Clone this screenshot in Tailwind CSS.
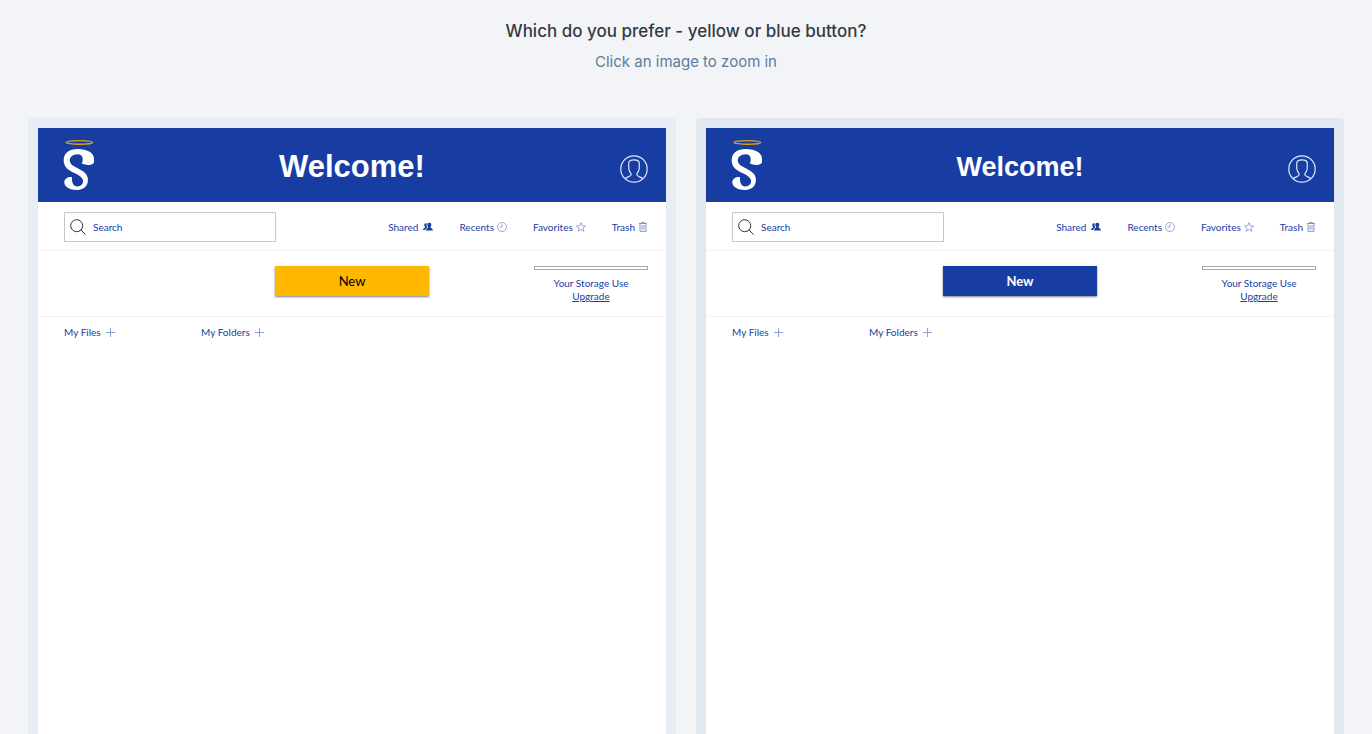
<!DOCTYPE html>
<html lang="en">
<head>
<meta charset="utf-8">
<meta name="viewport" content="width=device-width, initial-scale=1">
<title>Which do you prefer - yellow or blue button?</title>
<script src="https://cdn.jsdelivr.net/npm/@tailwindcss/browser@4"></script>
</head>
<body class="flex min-h-screen flex-col bg-[#f2f4f8] font-['Inter','Liberation_Sans',sans-serif]">
<svg class="hidden" aria-hidden="true">
  <symbol id="logo" viewBox="0 0 32 52">
    <ellipse cx="16.5" cy="3.4" rx="13.2" ry="1.8" fill="none" stroke="#dba60f" stroke-width="1.4"/>
    <path fill="#fff" d="M30.6 24.2C28.5 26.4 23 26.6 18.8 24.6C20.6 20.4 20.2 15.3 14.8 15.2C9.6 15.2 6.3 18.3 6.8 22.3C7.5 27.6 17.2 29.3 22 34C25.4 37.3 25.9 42.8 23.4 46.6C21.4 49.7 17.8 51.1 13.4 51C7 50.9 1.3 47.8 1.3 43.2C1.4 39.8 4.4 37.8 8.9 38C8.8 43.8 10 47.3 14.6 47.4C18.8 47.4 20.8 44.2 19.8 40.6C18.2 35.5 8.8 33.8 4 29.4C1.4 27 .5 24 .7 20.6C1 13.6 6.6 9.9 14.5 9.9C23.6 9.8 30.6 13.2 31 19.4C31.1 21.4 31.1 22.8 30.6 24.2Z"/>
  </symbol>
  <symbol id="person" viewBox="0 0 28 28">
    <g fill="none" stroke="#e3e9f6" stroke-width="1.2">
      <circle cx="14" cy="14" r="13.2"/>
      <path d="M5 23.6C7.5 21.8 11 21.3 11.2 19.7C11.5 18.2 8.9 16.4 8.8 13.8L8.7 8.4C8.7 6.2 10.5 4.8 14 4.8S19.3 6.2 19.3 8.4L19.2 13.8C19.1 16.4 16.5 18.2 16.8 19.7C17 21.3 20.5 21.8 23 23.6"/>
    </g>
  </symbol>
  <symbol id="search" viewBox="0 0 16 16">
    <g fill="none" stroke="#333" stroke-width="1"><circle cx="6.7" cy="6.7" r="6"/><path d="M11 11L15.5 15.5"/></g>
  </symbol>
  <symbol id="people" viewBox="0 0 10 10">
    <path fill="#183da2" d="M4.3 2.6C4.3 1.5 5.1 .8 6.3 .8S8.3 1.5 8.3 2.6C8.3 4 7.6 4.5 7.5 5.3C7.6 6.2 9.7 6.2 10 8.6H2.9C3.2 6.2 5 6.2 5.1 5.3C5 4.5 4.3 4 4.3 2.6ZM3.7 1.5C2.4 .9 1.2 1.7 1.3 3C1.4 4.3 2 4.5 2 5.2C1.9 6 .3 6 0 7.9H2.2C2.5 6.5 3.6 6.1 4.1 5.5C4.1 4.7 3.2 3.5 3.7 1.5Z"/>
  </symbol>
  <symbol id="clock" viewBox="0 0 10 10">
    <g fill="none" stroke="#7d93cc" stroke-width=".8"><circle cx="5" cy="5" r="4.5"/><path d="M5 2V5H2.5"/></g>
  </symbol>
  <symbol id="star" viewBox="0 0 10 10">
    <path fill="none" stroke="#7188c8" stroke-width=".7" stroke-linejoin="round" d="M5 .6L6.3 3.8L9.6 3.9L7 6L7.9 9.3L5 7.4L2.1 9.3L3 6L.4 3.9L3.7 3.8Z"/>
  </symbol>
  <symbol id="bin" viewBox="0 0 10 10">
    <path fill="none" stroke="#6880c3" stroke-width=".8" d="M1 1.5H9M3.5 1.5V.5H6.5V1.5M2 1.5V9.4H8V1.5M4 3V7.8M6 3V7.8"/>
  </symbol>
  <symbol id="plus" viewBox="0 0 10 10">
    <path stroke="#88a3dc" stroke-width="1" d="M5.5 1V10M1 5.5H10"/>
  </symbol>
</svg>

<header class="flex h-[118px] shrink-0 flex-col items-center pt-[18px] text-center">
  <h1 class="text-[17px] leading-[26px] font-medium text-[#343b43]">Which do you prefer - yellow or blue button?</h1>
  <p class="mt-[5px] text-[15px] leading-[26px] text-[#5d7c9c]">Click an image to zoom in</p>
</header>

<main class="grid flex-1 grid-cols-2 gap-5 px-7">
  <section aria-label="Yellow button" class="flex flex-col rounded-t bg-[#e8edf5] px-[10px] pt-[10px]">
    <div class="flex-1 bg-white font-['Lato','Liberation_Sans',sans-serif] text-[10px] leading-[14px] text-[#183da2]">
      <div class="grid h-[74px] grid-cols-[1fr_auto_1fr] items-center bg-[#183da2] px-[18px]">
        <svg class="ml-[7px] h-[52px] w-8" role="img" aria-label="S"><use href="#logo"/></svg>
        <h2 class="pt-1 font-['Liberation_Sans',sans-serif] text-[31px] leading-9 font-bold text-white">Welcome!</h2>
        <button aria-label="Account" class="mt-[7px] justify-self-end"><svg class="size-7"><use href="#person"/></svg></button>
      </div>
      <div class="flex h-[49px] items-center justify-between border-b border-[#f3f3f3] pt-[2px] pr-[18px] pl-[26px]">
        <label class="flex h-[30px] w-[212px] items-center gap-[7px] border border-[#c8c8c8] px-[5px]">
          <svg class="size-4 shrink-0"><use href="#search"/></svg>
          <input type="text" placeholder="Search" aria-label="Search" class="w-full min-w-0 bg-transparent outline-none placeholder:text-[#183da2]">
        </label>
        <nav class="flex items-center gap-[26px]">
          <a href="#" class="flex items-center gap-[5px]">Shared <svg class="size-[10px]"><use href="#people"/></svg></a>
          <a href="#" class="flex items-center gap-[3px]">Recents <svg class="size-[10px]"><use href="#clock"/></svg></a>
          <a href="#" class="flex items-center gap-[3px]">Favorites <svg class="size-[10px]"><use href="#star"/></svg></a>
          <a href="#" class="flex items-center gap-[3px]">Trash <svg class="size-[10px]"><use href="#bin"/></svg></a>
        </nav>
      </div>
      <div class="grid h-[66px] grid-cols-[1fr_auto_1fr] border-b border-[#f3f3f3] px-[18px] pt-[15px]">
        <button class="col-start-2 h-[30px] w-[154px] bg-[#ffb700] text-[13px] leading-5 text-black shadow-[0_1px_2px_#00000080]">New</button>
        <div class="w-[114px] justify-self-end text-center">
          <div class="h-1 border border-[#a8a8a8] bg-white"></div>
          <p class="mt-[6px]">Your Storage Use</p>
          <a href="#" class="block leading-[13px] underline">Upgrade</a>
        </div>
      </div>
      <div class="flex pt-2 pl-[26px]">
        <button class="flex w-[137px] items-center gap-1">My Files <svg class="size-[10px]"><use href="#plus"/></svg></button>
        <button class="flex items-center gap-1">My Folders <svg class="size-[10px]"><use href="#plus"/></svg></button>
      </div>
    </div>
  </section>

  <section aria-label="Blue button" class="flex flex-col rounded-t bg-[#e1e8ef] px-[10px] pt-[10px]">
    <div class="flex-1 bg-white font-['Lato','Liberation_Sans',sans-serif] text-[10px] leading-[14px] text-[#183da2]">
      <div class="grid h-[74px] grid-cols-[1fr_auto_1fr] items-center bg-[#183da2] px-[18px]">
        <svg class="ml-[7px] h-[52px] w-8" role="img" aria-label="S"><use href="#logo"/></svg>
        <h2 class="pt-1 font-['Liberation_Sans',sans-serif] text-[27px] leading-9 font-bold text-white">Welcome!</h2>
        <button aria-label="Account" class="mt-[7px] justify-self-end"><svg class="size-7"><use href="#person"/></svg></button>
      </div>
      <div class="flex h-[49px] items-center justify-between border-b border-[#f3f3f3] pt-[2px] pr-[18px] pl-[26px]">
        <label class="flex h-[30px] w-[212px] items-center gap-[7px] border border-[#c8c8c8] px-[5px]">
          <svg class="size-4 shrink-0"><use href="#search"/></svg>
          <input type="text" placeholder="Search" aria-label="Search" class="w-full min-w-0 bg-transparent outline-none placeholder:text-[#183da2]">
        </label>
        <nav class="flex items-center gap-[26px]">
          <a href="#" class="flex items-center gap-[5px]">Shared <svg class="size-[10px]"><use href="#people"/></svg></a>
          <a href="#" class="flex items-center gap-[3px]">Recents <svg class="size-[10px]"><use href="#clock"/></svg></a>
          <a href="#" class="flex items-center gap-[3px]">Favorites <svg class="size-[10px]"><use href="#star"/></svg></a>
          <a href="#" class="flex items-center gap-[3px]">Trash <svg class="size-[10px]"><use href="#bin"/></svg></a>
        </nav>
      </div>
      <div class="grid h-[66px] grid-cols-[1fr_auto_1fr] border-b border-[#f3f3f3] px-[18px] pt-[15px]">
        <button class="col-start-2 h-[30px] w-[154px] bg-[#183da2] text-[13px] leading-5 font-bold text-white shadow-[0_1px_2px_#00000080]">New</button>
        <div class="w-[114px] justify-self-end text-center">
          <div class="h-1 border border-[#a8a8a8] bg-white"></div>
          <p class="mt-[6px]">Your Storage Use</p>
          <a href="#" class="block leading-[13px] underline">Upgrade</a>
        </div>
      </div>
      <div class="flex pt-2 pl-[26px]">
        <button class="flex w-[137px] items-center gap-1">My Files <svg class="size-[10px]"><use href="#plus"/></svg></button>
        <button class="flex items-center gap-1">My Folders <svg class="size-[10px]"><use href="#plus"/></svg></button>
      </div>
    </div>
  </section>
</main>
</body>
</html>
